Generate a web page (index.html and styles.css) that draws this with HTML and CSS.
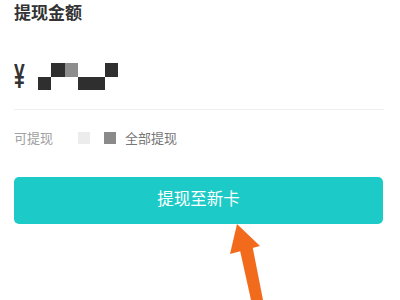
FILE: index.html
```html
<!DOCTYPE html>
<html lang="zh">
<head>
<meta charset="utf-8">
<link rel="stylesheet" href="styles.css">
</head>
<body>
<div class="page">
  <h1 class="title">提现金额</h1>
  <div class="amount">
    <span class="yen">¥</span>
    <div class="mosaic">
      <i class="c dark r1 k2"></i>
      <i class="c gray r1 k3"></i>
      <i class="c dark r1 k6"></i>
      <i class="c dark r2 k1"></i>
      <i class="c dark r2 k4 w2"></i>
    </div>
  </div>
  <div class="avail">
    <span class="label">可提现</span>
    <span class="sq light"></span>
    <span class="sq mid"></span>
    <span class="all">全部提现</span>
  </div>
  <button class="btn">提现至新卡</button>
</div>
<svg class="arrow" width="60" height="80" viewBox="0 0 60 80">
  <polygon points="22,4 45,26 15,34" fill="#f26b1d"/>
  <polygon points="24,26 37,24 48,80 36,80" fill="#f26b1d"/>
</svg>
</body>
</html>
```
FILE: styles.css
```css
html, body { margin: 0; padding: 0; background: #fff; }
body {
  width: 400px; height: 300px; overflow: hidden; position: relative;
  font-family: "Noto Sans CJK SC", "Liberation Sans", sans-serif;
}
.page { padding: 0 16px 0 14px; }
.title {
  margin: 0; font-size: 17px; line-height: 24px; font-weight: 700; color: #333;
}
.amount {
  margin-top: 39px; height: 46px; border-bottom: 1px solid #efefef;
  display: flex; align-items: flex-start;
}
.yen {
  font-family: "Liberation Sans", sans-serif; font-weight: 700; font-size: 35px;
  line-height: 28px; color: #333; width: 12px; margin-top: -1px;
  transform: scaleX(0.55); transform-origin: left top; margin-left: 0;
}
.mosaic {
  margin-left: 12px;
  display: grid; grid-template-columns: repeat(6, 13.4px); grid-template-rows: 13.5px 13px;
}
.c { display: block; }
.dark { background: #2f2f2f; }
.gray { background: #8d8d8d; }
.r1 { grid-row: 1; } .r2 { grid-row: 2; }
.k1 { grid-column: 1; } .k2 { grid-column: 2; } .k3 { grid-column: 3; }
.k4 { grid-column: 4; } .k6 { grid-column: 6; }
.w2 { grid-column: 4 / span 2; }
.avail {
  margin-top: 19px; height: 18px; display: flex; align-items: center;
  font-size: 13px; line-height: 18px;
}
.label { color: #a0a0a0; width: 64px; }
.sq { width: 12px; height: 12px; }
.light { background: #ececec; margin-right: 14px; }
.mid { background: #8a8a8a; margin-right: 9px; }
.all { color: #777; }
.btn {
  display: block; width: 369px; height: 47px; margin-top: 30px;
  border: 0; border-radius: 5px; background: #1ccbc7; color: #fff;
  font-family: "Noto Sans CJK SC", sans-serif; font-size: 16.5px; padding: 0 0 6px;
}
.arrow { position: absolute; left: 215px; top: 220px; }
```
